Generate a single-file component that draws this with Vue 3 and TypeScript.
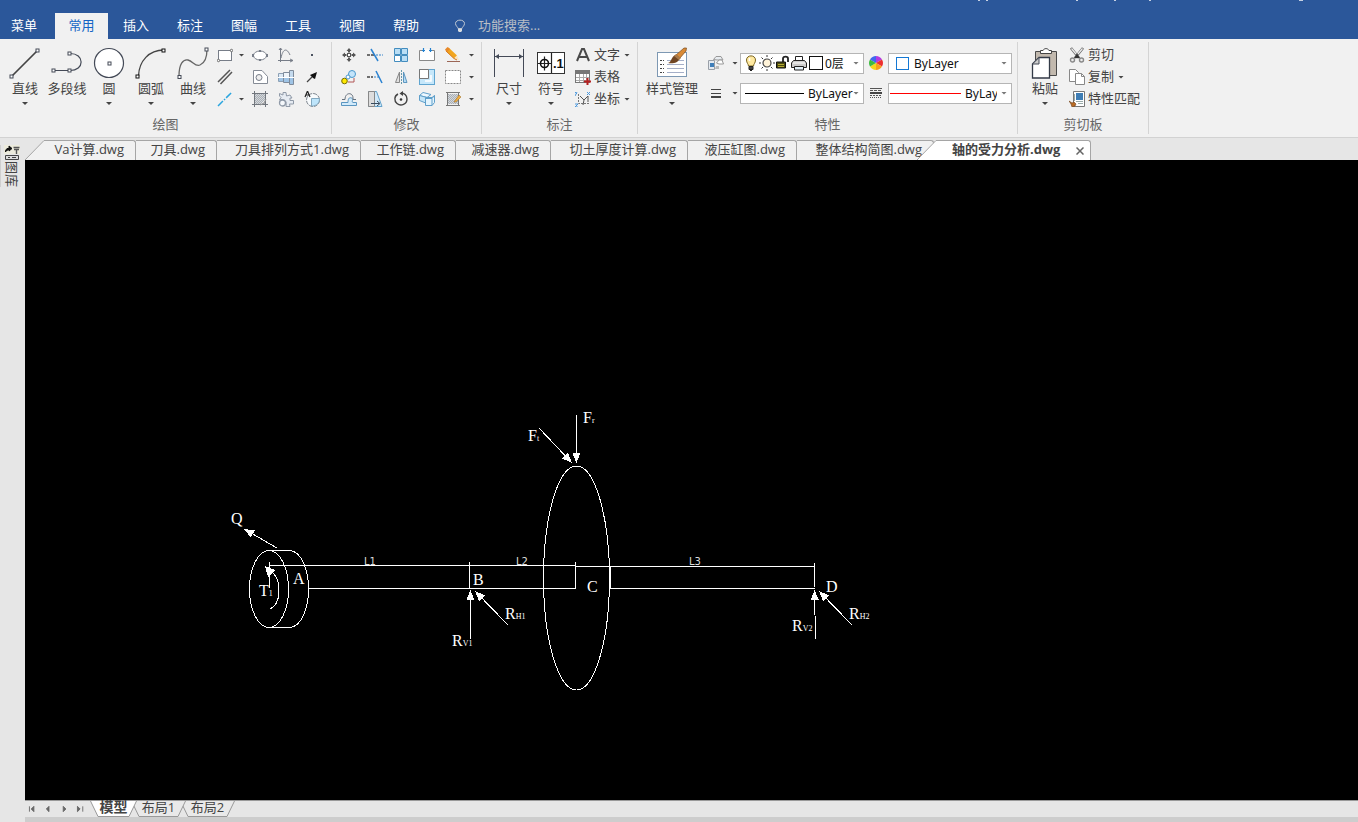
<script setup lang="ts">
import { ref } from 'vue'

interface BigTool { icon: string; label: string; menu: boolean }
interface SmallTool { icon: string; label: string; menu?: boolean }

const menus: string[] = ['常用', '插入', '标注', '图幅', '工具', '视图', '帮助']
const activeMenu = ref('常用')

const node = (x: number, y: number, c = '#444a57') =>
  `<rect x="${x - 1.5}" y="${y - 1.5}" width="3" height="3" fill="#fff" stroke="${c}"/>`
const hatch = (x: number, y: number, s: number) => {
  let d = ''
  for (let i = 2; i < s * 2; i += 2) {
    const a = Math.max(0, i - s)
    const b = Math.min(i, s)
    d += `M${x + a} ${y + s - b}L${x + b} ${y + s - a}`
  }
  return `<rect x="${x}" y="${y}" width="${s}" height="${s}" fill="#d4d8dc"/><path d="${d}" stroke="#a0a5ab" stroke-width=".8"/>`
}

const big: Record<string, string> = {
  line: `<path d="M3 29L29 3" stroke="#444" stroke-width="1.7"/>${node(2.5, 29.5)}${node(28.5, 3.5)}`,
  pline: `<path d="M2 23.500H18.500C34 24 34 6 18.500 6.500" stroke="#444a57" stroke-width="1.200"/>${node(2.5, 23.5)}${node(18.5, 23.5)}${node(18.5, 6.5)}`,
  circle: `<circle cx="16" cy="16" r="14.500" fill="#fff" stroke="#444a57" stroke-width="1.200"/>${node(16.5, 16.5)}`,
  arc: `<path d="M3.500 29C4 14 14 3 29 3" stroke="#444" stroke-width="1.300"/>${node(2.5, 29.5, '#111')}${node(28.5, 3.5, '#111')}`,
  curve: `<path d="M2 29C2 17 6 12 11 13S18 20 23 18S30 10 30 2" stroke="#666" stroke-width="1.300"/>${node(2.5, 30)}${node(29.5, 2.5)}`,
  dim: `<path d="M1.500 2V30M30.500 2V30M2 9.500H30" stroke="#444a57"/><path d="M2 9.500l4-2.500v5zM30 9.500l-4-2.500v5z" fill="#444a57"/>`,
  symbol: `<rect x="2.500" y="5.500" width="27" height="21" fill="#fff" stroke="#333"/><path d="M16.500 6V26M3 16.500H16M9.500 9.500V23.500" stroke="#222" stroke-width="1.200"/><circle cx="9.500" cy="16.500" r="4" stroke="#111" stroke-width="1.600"/><text x="18" y="21" font-family="Liberation Sans, sans-serif" font-size="13" font-weight="bold" fill="#111">.1</text>`,
  style: `<rect x="1.500" y="5.500" width="29" height="24" fill="#fff" stroke="#7d98b3"/><path d="M4 13.500h4M4 17.500h4M4 21.500h4M4 25.500h4" stroke="#444" stroke-dasharray="2 1"/><path d="M11 13.500h4M22 13.500h6M11 17.500h17M11 21.500h17M11 25.500h17" stroke="#a5afc8"/><path d="M20 8L28 1H30.500L30 4L24 11Z" fill="#d98a36" stroke="#7a4a1c" stroke-width=".7"/><path d="M12 16C16 15 15 9 20 8L24 11C22 16 17 17 12 16Z" fill="#704522"/><path d="M20 7L25 11L23 13L18 9Z" fill="#a97948"/>`,
  paste: `<path d="M6.500 4.500H27.500V28.500H6.500Z" fill="#c2b9ae" stroke="#4a4a4a"/><path d="M11.500 6.500V3.500H14C15 1 19 1 20 3.500H22.500V6.500Z" fill="#fff" stroke="#444"/><path d="M3.500 17L10 10.500H20.500V31H3.500Z" fill="#fff" stroke="#333a47" stroke-width="1.300"/><path d="M10 10.500V17H3.500Z" fill="#ccc" stroke="#444a57"/>`,
}

const small: Record<string, string> = {
  rect: `<rect x="1.500" y="3.500" width="13" height="10" fill="#fff" stroke="#777d88"/><circle cx="1.500" cy="13.500" r="1.200" fill="#fff" stroke="#666"/><circle cx="14.500" cy="3.500" r="1.200" fill="#fff" stroke="#666"/>`,
  parallel: `<path d="M1 13L13 1M3.500 15L15 3" stroke="#555" stroke-width="1.500"/>`,
  xline: `<path d="M1 15L15 1" stroke="#2aa5df" stroke-width="1.500" stroke-dasharray="7 1.500 1.500 1.500"/>`,
  ellipse: `<ellipse cx="8" cy="8.500" rx="6.500" ry="4.500" fill="#fff" stroke="#777d88"/><path d="M0 7h2v3H0zM14 7h2v3h-2zM7 3h2v2H7zM7 12h2v2H7z" fill="#777d88"/>`,
  polygon: `<path d="M1.500 1.500H10L15.500 7.500V14.500H1.500Z" fill="#fff" stroke="#858b95"/><circle cx="7" cy="8.500" r="3" fill="#eee" stroke="#777d88"/>`,
  hatch: `${hatch(2, 3, 11)}<path d="M2.500 0V16M13.500 0V16M0 2.500H16M0 13.500H16" stroke="#72777e"/><path d="M8 14Q13 13 14 8" fill="#fff" stroke="#888"/>`,
  func: `<path d="M2.500 1V15M0 13.500H15M12 12l3 1.500L12 15M1 3l1.500-2L4 3" stroke="#777d88"/><path d="M3 11C5 1 9 1 12 8" stroke="#777d88"/>`,
  shaft: `<path d="M.5 4.500H5.500V12.500H.5Z" fill="#dce9f5" stroke="#8ca0b5"/><path d="M5.500 3.500H11.500V13.500H5.500Z" fill="#eef4fa" stroke="#7e8b9b"/><path d="M11.500 1.500H15.500V15.500H11.500Z" fill="#c4daee" stroke="#7e8b9b"/><path d="M1 9H5V12H1ZM6 9H11V13H6ZM12 9H15V15H12Z" fill="#9fc4e6"/><path d="M0 8.500H16" stroke="#fff"/>`,
  gear: `<path d="M1.500 2.500L5 4V1.500H8L8.500 5L12 4L14 7H12V9.500H15.500V13H11.500L12 15.500H8C8 14 9 11 7 9.500C5 8 3 8.500 1.500 9L3 6.500L1.500 5Z" fill="#e6ebf2" stroke="#909aa8"/><circle cx="4.500" cy="12" r="3" fill="#f5f8fb" stroke="#909aa8" stroke-width="1.300"/>`,
  point: `<rect x="7" y="7" width="2" height="2" fill="#4b5360"/>`,
  arrow: `<path d="M3 13L8 8" stroke="#444" stroke-width="1.200"/><path d="M13 3L11 10L9 9L8 8L6 6Z" fill="#111"/>`,
  zone: `<circle cx="9" cy="9" r="6.500" fill="#f8fbfd" stroke="#7d858e" stroke-dasharray="4 1"/><path d="M7.500 7.500H15.500C15.500 12 13 15 7.500 15Z" fill="#bee5fb" stroke="#83a9c0"/><path d="M1 6L3.500 0L6 6M2 4H5" stroke="#222" stroke-width="1.200"/>`,
  move: `<path d="M8 1l2.500 3H9v1.500H7V4H5.500zM8 15l2.500-3H9v-1.500H7V12H5.500zM1 8l3-2.500V7h1.500v2H4v1.500zM15 8l-3-2.500V7h-1.500v2H12v1.500z" fill="#555"/><rect x="6.500" y="6.500" width="3" height="3" fill="#fff" stroke="#555"/>`,
  trim: `<path d="M0 8H7" stroke="#444" stroke-width="1.500" stroke-dasharray="3 1"/><path d="M9 8H16" stroke="#3784ca" stroke-width="1.200" stroke-dasharray="2 1"/><path d="M4 2L11 14" stroke="#2b83d2" stroke-width="1.500"/>`,
  array: `<path d="M1.500 1.500h6v6h-6zM8.500 1.500h6v6h-6zM8.500 8.500h6v6h-6z" fill="#b9def5" stroke="#438dbf"/><path d="M1.500 8.500h6v6h-6z" fill="#fff" stroke="#438dbf"/>`,
  break: `<path d="M.5 3.500H15.500V13.500H.5Z" fill="#fff" stroke="#888"/><path d="M5 3.500H11" stroke="#fff" stroke-width="2"/><path d="M4.500 1V5M11.500 1V5M3 3.500H6M10 3.500H13" stroke="#2481cf" stroke-width="1.200"/>`,
  erase: `<path d="M.5 3.500L3.500 .5L12 8.500L9 11.500Z" fill="#f2a51d"/><path d="M9 11.500L12 8.500L14 13Z" fill="#fbe4bd"/><path d="M1 4L9 11.500L12 13" stroke="#d57516"/><path d="M0 2.500L2.500 0L5 2L2 5Z" fill="#e7882b"/><path d="M2 14.500H15" stroke="#9b6657"/>`,
  copy: `<circle cx="3.500" cy="12" r="2.800" fill="#ffe900" stroke="#746b00"/><circle cx="11" cy="5" r="3.500" fill="#c4e4fa" stroke="#4a98cc"/><circle cx="7" cy="8" r="2" fill="#fff" stroke="#4a98cc"/><path d="M7 13H13V9" stroke="#b15757"/>`,
  extend: `<path d="M0 8H6" stroke="#444" stroke-width="1.500" stroke-dasharray="3 1"/><path d="M7 8H12" stroke="#3784ca" stroke-dasharray="2 1"/><path d="M9 2L15 14" stroke="#2b83d2" stroke-width="1.500"/>`,
  mirror: `<path d="M6.500 3V13.500H2.500Z" fill="#e0e0e0" stroke="#888"/><path d="M10.500 3V13.500H14Z" fill="#b6dcf5" stroke="#5c96bf"/><path d="M8.500 1V15" stroke="#69a" stroke-dasharray="2 1"/>`,
  scale: `<rect x=".5" y=".5" width="15" height="15" fill="#c6e7fa" stroke="#60a5d0"/><path d="M.5 .5H9.500V9.500H.5Z" fill="#fff" stroke="#777"/><path d="M12 6V12H6" stroke="#fff" stroke-width="1.500"/>`,
  select: `<rect x=".5" y="1.500" width="15" height="13" fill="#fff" stroke="#888" stroke-dasharray="2 1"/>`,
  offset: `<path d="M.5 14.500H15.500V11.500H12C10 11 13 8 10.500 7C8 6 7 8 7 11.500H.5Z" fill="#d2eafa" stroke="#5995c0"/><path d="M1 8.500H4C4 1 12 1 12 7V8.500H15" stroke="#68737f"/>`,
  stretch: `<path d="M1.500 .5H9.500L15 15.500H1.500Z" fill="#d2eafa" stroke="#64a2cb"/><path d="M1.500 .5H7.500V15.500H1.500Z" fill="#ddd" stroke="#888"/><path d="M4 12.500H12M10 10l3 2.500L10 15" stroke="#374b5f"/>`,
  rotate: `<path d="M5 3C1 5 1 10 4 12.500C8 16 14 13 14 8C14 4 11 2 8 2" stroke="#444" stroke-width="1.400"/><path d="M10 0L6.500 2.500L10 5Z" fill="#444"/><circle cx="8" cy="8.500" r="1.300" fill="#333"/>`,
  box: `<path d="M.5 4.500L4 1.500L12 3.500L8 6.500Z" fill="#eef8ff" stroke="#5f9fca"/><path d="M.5 4.500V9.500L8 12.500V6.500Z" fill="#c5e5f8" stroke="#5f9fca"/><path d="M6.500 6.500H13L15.500 4.500V11.500L13 14.500H6.500Z" fill="#e4f4fd" stroke="#5f9fca"/><path d="M6.500 7.500H13V14.500M13 7.500L15.500 4.500" stroke="#5f9fca"/>`,
  hatchEdit: `${hatch(3, 3, 10)}<path d="M2.500 1V15M13.500 1V15M1 1.500H15M1 14.500H15" stroke="#777"/><path d="M9 11L14 4L16 6L11 11Z" fill="#efad3f" stroke="#9b6b24" stroke-width=".5"/>`,
  letter: `<path d="M2 14L7 2H9L14 14M4.500 10H11.500" stroke="#4a4a4a" stroke-width="2"/>`,
  table: `<rect x=".5" y="1.500" width="14" height="12" fill="#fff" stroke="#777"/><path d="M1 2H14V5H1Z" fill="#777"/><path d="M1 8.500H14M1 11.500H14M4.500 5V13M8.500 5V13M11.500 5V13" stroke="#aaa"/><path d="M12.500 9V16M9 12.500H16" stroke="#b52020" stroke-width="2"/>`,
  coord: `<path d="M3.500 3V12.500H14" stroke="#777" stroke-dasharray="2 1"/><path d="M5 5L9 9L8 14M9 9L13 5V11" stroke="#555"/><path d="M0 1l2 2M2 1L0 5M12 1l3 3M15 1l-3 3M0 13h3l-3 3h3" stroke="#4c98dc"/>`,
  cut: `<path d="M2 1L10 11M14 1L6 11" stroke="#666" stroke-width="2.600"/><path d="M2.500 1.500L7 7M13.500 1.500L9 7" stroke="#eee" stroke-width="1.200"/><circle cx="3.500" cy="13" r="2" fill="#eee" stroke="#888" stroke-width="1.400"/><circle cx="12.500" cy="13" r="2" fill="#eee" stroke="#888" stroke-width="1.400"/><path d="M8 7l3 4H5z" fill="#333"/>`,
  duplicate: `<path d="M.5 .5H6.500L9.500 3.500V12.500H.5Z" fill="#fff" stroke="#888"/><path d="M6.500 4.500H12.500L15.500 7.500V15.500H6.500Z" fill="#fff" stroke="#888"/><path d="M12.500 4.500V7.500H15.500" stroke="#888"/>`,
  match: `<path d="M4.500 .5H15.500V15.500H4.500Z" fill="#fff" stroke="#777"/><rect x="7" y="2" width="7" height="7" fill="#3e7db5"/><path d="M7 10.500H14M9 12.500H14M5.500 3V10" stroke="#9aa"/><path d="M0 10L3 12L5 11L7 13L6 15L3 16L2 13Z" fill="#b96c25" stroke="#714019" stroke-width=".6"/>`,
  layers: `<path d="M5.500 4.500L8 1.500H13L15 5L9 5Z" fill="#e8ecf0" stroke="#999"/><path d="M8.500 8L11 5H14L15.500 9H11Z" fill="#fff" stroke="#999"/><path d="M.5 5.500H6.500V14.500H.5Z" fill="#e5eaf0" stroke="#9aa0a8"/><rect x="2" y="8" width="4" height="4" fill="#3f7eb9"/><path d="M8 11h3v3H7z" fill="#bbb"/>`,
  lineweight: `<path d="M3 4.500H13M3 8.500H13" stroke="#444"/><path d="M3 12H13" stroke="#444" stroke-width="2"/>`,
  linetype: `<path d="M2 3.500H14" stroke="#555"/><path d="M2 5.500H14" stroke="#555" stroke-dasharray="3 1"/><path d="M2 8H14" stroke="#444" stroke-width="2"/><path d="M2 10.500H14" stroke="#555" stroke-dasharray="2 1"/><path d="M2 12.500H14" stroke="#555" stroke-dasharray="1 1"/>`,
  wheel: `<path d="M8 8V1A7 7 0 0 1 14 4.500Z" fill="#b33be0"/><path d="M8 8L14 4.500A7 7 0 0 1 14 11.500Z" fill="#ed2e2e"/><path d="M8 8L14 11.500A7 7 0 0 1 8 15Z" fill="#f99d1c"/><path d="M8 8V15A7 7 0 0 1 2 11.500Z" fill="#f3d51d"/><path d="M8 8L2 11.500A7 7 0 0 1 2 4.500Z" fill="#3dbb3f"/><path d="M8 8L2 4.500A7 7 0 0 1 8 1Z" fill="#3f68ee"/>`,
  bulb: `<path d="M5.500 11C5.500 9 3.500 8 3.500 5C3.500-.5 12.500-.5 12.500 5C12.500 8 10.500 9 10.500 11Z" fill="#ffe9a0" stroke="#7a6420"/><path d="M6 11.500H10V14.500H6ZM7 15.500H9" fill="#444" stroke="#222"/><path d="M6.500 3V6" stroke="#fff" stroke-width="1.500"/>`,
  sun: `<circle cx="8" cy="8" r="4" fill="#fff3d8" stroke="#444" stroke-width="1.200"/><path d="M8 0V2M8 14V16M0 8H2M14 8H16M2.500 2.500l1.500 1.500M12 12l1.500 1.500M2.500 13.500L4 12M12 4l1.500-1.500" stroke="#333"/>`,
  lock: `<path d="M8 8V3.500C8 1 13 1 13 3.500V7" stroke="#222" stroke-width="1.800"/><path d="M1.500 7H10.500V13H1.500Z" fill="#4c4a10" stroke="#111"/><path d="M3 9.500H9M3 11.500H9" stroke="#b4aa32"/>`,
  printer: `<path d="M4.500 6V1.500H11.500V6" fill="#fff" stroke="#222"/><path d="M2.500 5.500H13.500L15.500 8V12.500H.5V8Z" fill="#ccc" stroke="#222"/><path d="M3.500 11.500H12.500V15H3.500Z" fill="#e3f0f8" stroke="#222"/><path d="M2 8H14" stroke="#fff"/>`,
}

const drawBig: BigTool[] = [
  { icon: 'line', label: '直线', menu: true },
  { icon: 'pline', label: '多段线', menu: false },
  { icon: 'circle', label: '圆', menu: true },
  { icon: 'arc', label: '圆弧', menu: true },
  { icon: 'curve', label: '曲线', menu: true },
]
const drawShapes: SmallTool[] = [
  { icon: 'rect', label: '矩形', menu: true },
  { icon: 'parallel', label: '平行线' },
  { icon: 'xline', label: '中心线', menu: true },
]
const drawMore: SmallTool[] = [
  { icon: 'ellipse', label: '椭圆' }, { icon: 'func', label: '公式曲线' }, { icon: 'point', label: '点' },
  { icon: 'polygon', label: '局部放大' }, { icon: 'shaft', label: '孔/轴' }, { icon: 'arrow', label: '箭头' },
  { icon: 'hatch', label: '剖面线' }, { icon: 'gear', label: '齿形' }, { icon: 'zone', label: '圆弧标记' },
]
const modifyTools: SmallTool[] = [
  { icon: 'move', label: '平移' }, { icon: 'trim', label: '裁剪' }, { icon: 'array', label: '阵列' }, { icon: 'break', label: '打断' }, { icon: 'erase', label: '删除' },
  { icon: 'copy', label: '平移复制' }, { icon: 'extend', label: '延伸' }, { icon: 'mirror', label: '镜像' }, { icon: 'scale', label: '缩放' }, { icon: 'select', label: '选择' },
  { icon: 'offset', label: '等距线' }, { icon: 'stretch', label: '拉伸' }, { icon: 'rotate', label: '旋转' }, { icon: 'box', label: '分解' }, { icon: 'hatchEdit', label: '编辑剖面线' },
]
const markBig: BigTool[] = [
  { icon: 'dim', label: '尺寸', menu: true },
  { icon: 'symbol', label: '符号', menu: true },
]
const markRows: SmallTool[] = [
  { icon: 'letter', label: '文字', menu: true },
  { icon: 'table', label: '表格' },
  { icon: 'coord', label: '坐标', menu: true },
]
const clipRows: SmallTool[] = [
  { icon: 'cut', label: '剪切' },
  { icon: 'duplicate', label: '复制', menu: true },
  { icon: 'match', label: '特性匹配' },
]

const docs = [
  { name: 'Va计算.dwg', width: 91 },
  { name: '刀具.dwg', width: 81 },
  { name: '刀具排列方式1.dwg', width: 144 },
  { name: '工作链.dwg', width: 95 },
  { name: '减速器.dwg', width: 95 },
  { name: '切土厚度计算.dwg', width: 137 },
  { name: '液压缸图.dwg', width: 109 },
  { name: '整体结构简图.dwg', width: 137 },
]

const sheets = [
  { name: '模型', width: 47 },
  { name: '布局1', width: 55 },
  { name: '布局2', width: 55 },
]
const activeSheet = ref('模型')
const pagers = [
  { label: '首页', d: 'M4 6V12M9 6V12L6 9Z' },
  { label: '上一页', d: 'M8 6V12L5 9Z' },
  { label: '下一页', d: 'M6 6V12L9 9Z' },
  { label: '末页', d: 'M10 6V12M4 6V12L7 9Z' },
]

interface Force { x1: number; y1: number; x2: number; y2: number }
const forces: Force[] = [
  { x1: 277, y1: 548, x2: 244, y2: 529 },
  { x1: 539, y1: 428, x2: 572, y2: 463 },
  { x1: 576.5, y1: 415, x2: 576.5, y2: 463 },
  { x1: 470.5, y1: 639, x2: 470.5, y2: 590 },
  { x1: 508, y1: 625, x2: 475, y2: 591 },
  { x1: 815.5, y1: 639, x2: 814.5, y2: 590 },
  { x1: 852, y1: 625, x2: 819, y2: 591 },
]
const head = (f: Force): string => {
  const len = Math.hypot(f.x2 - f.x1, f.y2 - f.y1)
  const ux = (f.x2 - f.x1) / len
  const uy = (f.y2 - f.y1) / len
  const bx = f.x2 - ux * 10
  const by = f.y2 - uy * 10
  return `${f.x2},${f.y2} ${bx - uy * 4},${by + ux * 4} ${bx + uy * 4},${by - ux * 4}`
}
const marks = [
  { x: 231, y: 524, t: 'Q', s: '' },
  { x: 259, y: 596, t: 'T', s: '1' },
  { x: 293, y: 584, t: 'A', s: '' },
  { x: 473, y: 585, t: 'B', s: '' },
  { x: 587, y: 592, t: 'C', s: '' },
  { x: 826, y: 592, t: 'D', s: '' },
  { x: 528, y: 441, t: 'F', s: 't' },
  { x: 583, y: 423, t: 'F', s: 'r' },
  { x: 452, y: 646, t: 'R', s: 'V1' },
  { x: 505, y: 619, t: 'R', s: 'H1' },
  { x: 792, y: 631, t: 'R', s: 'V2' },
  { x: 849, y: 619, t: 'R', s: 'H2' },
]
</script>

<template>
  <div class="app">
    <header class="menubar">
      <svg class="title-edge" width="330" height="2" aria-hidden="true">
        <path d="M1 .5h2M9 .5h2M99 .5h2M137 .5h2M172 .5h2M322 .5h4" stroke="#c6d1e3" />
      </svg>
      <button class="menu-main" type="button">菜单</button>
      <nav class="menus">
        <button v-for="m in menus" :key="m" type="button" class="menu" :class="{ active: m === activeMenu }" @click="activeMenu = m">{{ m }}</button>
      </nav>
      <label class="search">
        <svg width="12" height="14" viewBox="0 0 12 14" fill="none" aria-hidden="true">
          <path d="M4 9.500C4 8 1.500 7 1.500 4.500C1.500 0 10.500 0 10.500 4.500C10.500 7 8 8 8 9.500Z" stroke="#bfc8d4" />
          <path d="M4 10h4v2l-1 1H5l-1-1z" fill="#d9dde2" />
        </svg>
        <input type="text" placeholder="功能搜索..." aria-label="功能搜索" />
      </label>
    </header>

    <div class="ribbon">
      <section class="group group-draw">
        <div class="tools">
          <button v-for="b in drawBig" :key="b.icon" type="button" class="big">
            <svg width="32" height="32" viewBox="0 0 32 32" fill="none" v-html="big[b.icon]" />
            <span>{{ b.label }}</span>
            <i v-if="b.menu" class="caret" />
          </button>
          <div class="shapes">
            <div v-for="t in drawShapes" :key="t.icon" class="shape-row">
              <button type="button" class="tool" :aria-label="t.label"><svg width="16" height="16" viewBox="0 0 16 16" fill="none" v-html="small[t.icon]" /></button>
              <button v-if="t.menu" type="button" class="drop" :aria-label="t.label + '选项'"><i class="caret" /></button>
            </div>
          </div>
          <div class="matrix three">
            <button v-for="t in drawMore" :key="t.icon" type="button" class="tool" :aria-label="t.label"><svg width="16" height="16" viewBox="0 0 16 16" fill="none" v-html="small[t.icon]" /></button>
          </div>
        </div>
        <h2>绘图</h2>
      </section>

      <section class="group group-modify">
        <div class="tools">
          <div class="matrix five">
            <button v-for="t in modifyTools" :key="t.icon" type="button" class="tool" :aria-label="t.label"><svg width="16" height="16" viewBox="0 0 16 16" fill="none" v-html="small[t.icon]" /></button>
          </div>
          <div class="drops">
            <button v-for="n in 3" :key="n" type="button" class="drop" aria-label="更多"><i class="caret" /></button>
          </div>
        </div>
        <h2>修改</h2>
      </section>

      <section class="group group-mark">
        <div class="tools">
          <button v-for="b in markBig" :key="b.icon" type="button" class="big">
            <svg width="32" height="32" viewBox="0 0 32 32" fill="none" v-html="big[b.icon]" />
            <span>{{ b.label }}</span>
            <i class="caret" />
          </button>
          <div class="rows">
            <button v-for="t in markRows" :key="t.icon" type="button" class="row">
              <svg width="16" height="16" viewBox="0 0 16 16" fill="none" v-html="small[t.icon]" />
              <span>{{ t.label }}</span>
              <i v-if="t.menu" class="caret" />
            </button>
          </div>
        </div>
        <h2>标注</h2>
      </section>

      <section class="group group-props">
        <div class="tools">
          <button type="button" class="big wide">
            <svg width="32" height="32" viewBox="0 0 32 32" fill="none" v-html="big.style" />
            <span>样式管理</span>
            <i class="caret" />
          </button>
          <div class="props">
            <button type="button" class="prop-btn" aria-label="图层"><svg width="16" height="16" viewBox="0 0 16 16" fill="none" v-html="small.layers" /><i class="caret" /></button>
            <div class="combo">
              <span class="states">
                <svg v-for="s in ['bulb', 'sun', 'lock', 'printer']" :key="s" width="16" height="16" viewBox="0 0 16 16" fill="none" v-html="small[s]" />
                <b class="swatch black" />
              </span>
              <select aria-label="当前图层"><option>0层</option></select>
              <i class="caret" />
            </div>
            <button type="button" class="icon-btn" aria-label="颜色"><svg width="16" height="16" viewBox="0 0 16 16" fill="none" v-html="small.wheel" /></button>
            <div class="combo">
              <b class="swatch blue" />
              <select aria-label="颜色"><option>ByLayer</option></select>
              <i class="caret" />
            </div>
            <button type="button" class="prop-btn" aria-label="线宽"><svg width="16" height="16" viewBox="0 0 16 16" fill="none" v-html="small.lineweight" /><i class="caret" /></button>
            <div class="combo">
              <b class="stroke dark" />
              <select aria-label="线宽"><option>ByLayer</option></select>
              <i class="caret" />
            </div>
            <button type="button" class="icon-btn" aria-label="线型"><svg width="16" height="16" viewBox="0 0 16 16" fill="none" v-html="small.linetype" /></button>
            <div class="combo">
              <b class="stroke red" />
              <select class="narrow" aria-label="线型"><option>ByLayer</option></select>
              <i class="caret" />
            </div>
          </div>
        </div>
        <h2>特性</h2>
      </section>

      <section class="group group-clip">
        <div class="tools">
          <button type="button" class="big">
            <svg width="32" height="32" viewBox="0 0 32 32" fill="none" v-html="big.paste" />
            <span>粘贴</span>
            <i class="caret" />
          </button>
          <div class="rows">
            <button v-for="t in clipRows" :key="t.icon" type="button" class="row">
              <svg width="16" height="16" viewBox="0 0 16 16" fill="none" v-html="small[t.icon]" />
              <span>{{ t.label }}</span>
              <i v-if="t.menu" class="caret" />
            </button>
          </div>
        </div>
        <h2>剪切板</h2>
      </section>
    </div>

    <div class="workspace">
      <aside class="dock">
        <button type="button" class="library">
          <svg width="16" height="16" viewBox="0 0 16 16" fill="none" aria-hidden="true">
            <path d="M0 0H16V9H0Z" fill="#ecebdc" />
            <path d="M1.500 7V5.500L3 3.500H7M5 1L8 3.500L5 6Z" fill="#111" stroke="#111" />
            <path d="M9.500 2.500H15.500M10 4.500H15M12.500 4V9" stroke="#555" stroke-width="1.400" />
            <path d="M1.500 10.500H14.500V14.500H1.500Z" fill="#ddd" stroke="#444" />
            <path d="M4 12.500H6M8 12.500H12" stroke="#444" />
          </svg>
          <span>图库</span>
        </button>
      </aside>
      <main class="stage">
        <div class="doc-tabs" role="tablist">
          <svg class="slant" width="20" height="20" viewBox="0 0 20 20" fill="#f1f1f1" aria-hidden="true"><path d="M0 20L19 .5H20V20Z" /><path d="M0 20L19 .5H20" fill="none" stroke="#a5a5a5" /></svg>
          <button v-for="d in docs" :key="d.name" type="button" role="tab" class="doc" :style="{ width: d.width + 'px' }">{{ d.name }}</button>
          <div class="current">
            <svg class="slant" width="20" height="20" viewBox="0 0 20 20" fill="#fff" aria-hidden="true"><path d="M0 20L19 .5H20V20Z" /><path d="M0 20L19 .5H20" fill="none" stroke="#a5a5a5" /></svg>
            <div class="current-body">
              <button type="button" role="tab" aria-selected="true" class="current-name">轴的受力分析.dwg</button>
              <button type="button" class="close" aria-label="关闭"><svg width="8" height="8" viewBox="0 0 8 8"><path d="M.5 .5L7.500 7.500M7.500 .5L.5 7.500" stroke="#666" stroke-width="1.500" /></svg></button>
            </div>
          </div>
        </div>

        <div class="canvas">
          <svg class="drawing" width="100%" height="100%" fill="none" stroke="#fff" shape-rendering="crispEdges">
            <g transform="translate(-25 -160)">
              <ellipse cx="269" cy="589" rx="19.500" ry="38.500" />
              <path d="M269 550.500H290C302 552 308.500 570 308.500 589S302 626 290 627.500H269" />
              <path d="M269.500 562V588M269.500 565.500H575.500M469.500 562V588.500M575.500 562V588.500" />
              <path d="M309 588.500H576M575.500 566.500H814.500M814.500 563V587M610.500 588.500H815" />
              <path d="M543.500 565V589M610.500 566V589" />
              <ellipse cx="576.500" cy="578" rx="33" ry="112" />
              <path d="M270 609C281 604 282 582 273 573" />
              <polygon points="265,566 275,570 268,577" fill="#fff" stroke="none" />
              <g v-for="(f, i) in forces" :key="i">
                <line :x1="f.x1" :y1="f.y1" :x2="f.x2" :y2="f.y2" />
                <polygon :points="head(f)" fill="#fff" stroke="none" />
              </g>
              <g class="letters" stroke="none" fill="#fff">
                <text v-for="(m, i) in marks" :key="i" :x="m.x" :y="m.y">{{ m.t }}<tspan v-if="m.s" class="sub">{{ m.s }}</tspan></text>
              </g>
              <g class="dims" stroke="none" fill="#ddd">
                <text x="364" y="565">L1</text>
                <text x="516" y="565">L2</text>
                <text x="689" y="565">L3</text>
              </g>
            </g>
          </svg>
        </div>

        <footer class="sheets">
          <div class="pagers">
            <button v-for="p in pagers" :key="p.label" type="button" :aria-label="p.label"><svg width="16" height="16" viewBox="0 0 16 18"><path :d="p.d" fill="#666" stroke="#666" /></svg></button>
          </div>
          <button v-for="s in sheets" :key="s.name" type="button" class="sheet" :class="{ active: s.name === activeSheet }" :style="{ width: s.width + 'px' }" @click="activeSheet = s.name">
            <svg class="sheet-shape" :viewBox="`0 0 ${s.width} 17`" aria-hidden="true"><path :d="`M.5 0L8 15.500H${s.width - 8}L${s.width - .5} 0`" /></svg>
            <span>{{ s.name }}</span>
          </button>
        </footer>
        <div class="underbar" />
      </main>
    </div>
  </div>
</template>

<style>
body {
  margin: 0;
  background: #e6e6e6;
}
</style>

<style scoped>
.app {
  display: flex;
  flex-direction: column;
  min-height: 100vh;
  overflow: hidden;
  font-family: "Open Sans", "Noto Sans CJK SC", sans-serif;
  font-size: 13px;
  line-height: 18px;
  color: #444;
}
.app * {
  box-sizing: border-box;
}
button,
input,
select {
  margin: 0;
  padding: 0;
  border: 0;
  background: none;
  font: inherit;
  color: inherit;
}
svg {
  display: block;
  flex: none;
}

.menubar {
  position: relative;
  display: flex;
  align-items: flex-end;
  height: 39px;
  background: #2b579a;
  color: #fff;
}
.title-edge {
  position: absolute;
  top: 0;
  left: 977px;
}
.menu-main {
  width: 48px;
  height: 26px;
  margin-right: 7px;
  padding-bottom: 3px;
}
.menus {
  display: flex;
}
.menu {
  width: 54px;
  height: 26px;
  padding-bottom: 3px;
}
.menu.active {
  width: 53px;
  margin-right: 1px;
  background: #f1f1f1;
  color: #1565c5;
}
.search {
  display: flex;
  align-items: center;
  gap: 12px;
  height: 26px;
  margin-left: 21px;
}
.search input {
  width: 120px;
  padding-bottom: 3px;
  outline: none;
}
.search input::placeholder {
  color: #b9bec6;
  opacity: 1;
}

.ribbon {
  display: flex;
  height: 99px;
  padding: 3px 0;
  background: #f1f1f1;
  border-bottom: 1px solid #d2d2d2;
}
.group {
  display: flex;
  flex-direction: column;
  justify-content: space-between;
  border-right: 1px solid #d4d4d4;
}
.group h2 {
  margin: 0;
  font-size: 13px;
  font-weight: 400;
  line-height: 20px;
  text-align: center;
  color: #666;
}
.group-draw { width: 332px; }
.group-modify { width: 150px; }
.group-mark { width: 156px; }
.group-props { width: 380px; }
.group-clip { width: 131px; }
.tools {
  display: flex;
  padding-left: 4px;
}
.group-mark .tools,
.group-props .tools,
.group-clip .tools {
  padding-left: 6px;
}
.big {
  display: flex;
  flex-direction: column;
  align-items: center;
  width: 42px;
  height: 66px;
  padding-top: 5px;
  white-space: nowrap;
}
.big.wide {
  width: 56px;
}
.big .caret {
  margin-top: 5px;
}
.caret {
  flex: none;
  width: 6px;
  height: 3px;
  background: #444;
  clip-path: polygon(0 0, 100% 0, 50% 100%);
}
.shapes {
  width: 33px;
  padding-top: 2px;
}
.shape-row {
  display: flex;
  height: 22px;
}
.shape-row .tool {
  width: 22px;
}
.tool {
  display: flex;
  align-items: center;
  justify-content: center;
  height: 22px;
}
.drop {
  display: flex;
  align-items: center;
  justify-content: center;
  width: 11px;
  height: 22px;
}
.matrix {
  display: grid;
  grid-auto-rows: 22px;
  padding-top: 2px;
}
.three { grid-template-columns: repeat(3, 26px); }
.five { grid-template-columns: repeat(5, 26px); }
.drops {
  padding-top: 2px;
}
.rows {
  padding-top: 2px;
}
.row {
  display: flex;
  align-items: center;
  gap: 3px;
  height: 22px;
  padding-left: 3px;
  white-space: nowrap;
}
.row span {
  padding-bottom: 3px;
}
.row .caret {
  margin-left: 1px;
}
.props {
  display: grid;
  grid-template-columns: 40px 124px 24px 124px;
  grid-auto-rows: 30px;
  align-items: center;
  padding-top: 6px;
}
.prop-btn {
  display: flex;
  align-items: center;
  gap: 8px;
  padding-left: 8px;
}
.icon-btn {
  display: flex;
  justify-content: center;
}
.combo {
  display: flex;
  align-items: center;
  height: 21px;
  padding: 0 4px;
  background: #fff;
  border: 1px solid #b5b5b5;
  font-size: 12px;
  color: #111;
}
.combo select {
  flex: 1;
  min-width: 0;
  padding-top: 1px;
  appearance: none;
  font-family: "Noto Sans", "Noto Sans CJK SC", sans-serif;
  font-size: 12px;
  line-height: 18px;
}
.combo .narrow {
  margin-right: 4px;
}
.combo .caret {
  background: #777;
}
.states {
  display: flex;
  align-items: center;
  margin-left: -2px;
}
.swatch {
  flex: none;
  width: 14px;
  height: 14px;
  margin: 0 2px;
  background: #fff;
  border: 1px solid #111;
}
.swatch.blue {
  width: 13px;
  height: 13px;
  margin: 0 5px 0 3px;
  border-color: #1478d4;
}
.stroke {
  flex: none;
  height: 1px;
  margin-right: 4px;
}
.stroke.dark {
  width: 59px;
  background: #000;
}
.stroke.red {
  width: 71px;
  margin-left: -3px;
  background: #f00;
}

.workspace {
  display: flex;
  flex: 1;
  background: #e6e6e6;
}
.dock {
  flex: none;
  width: 25px;
  padding-top: 7px;
}
.library {
  display: flex;
  flex-direction: column;
  align-items: center;
  width: 22px;
  border-left: 1px solid #cfcfcf;
}
.library span {
  font-size: 13px;
  line-height: 14px;
  writing-mode: vertical-rl;
  text-orientation: sideways;
}
.stage {
  display: flex;
  flex: 1;
  flex-direction: column;
  min-width: 0;
}
.doc-tabs {
  display: flex;
  align-items: flex-end;
  height: 22px;
}
.doc {
  flex: none;
  height: 20px;
  padding: 0 11px 3px 0;
  background: #f1f1f1;
  border-top: 1px solid #a5a5a5;
  border-right: 1px solid #a5a5a5;
  border-top-right-radius: 3px;
  line-height: 16px;
  text-align: right;
  white-space: nowrap;
}
.current {
  display: flex;
  margin-left: -17px;
}
.current-body {
  display: flex;
  align-items: center;
  justify-content: space-between;
  width: 154px;
  height: 20px;
  padding: 0 6px 0 15px;
  background: #fff;
  border-top: 1px solid #a5a5a5;
  border-right: 1px solid #a5a5a5;
  border-top-right-radius: 3px;
}
.current-name {
  padding-bottom: 3px;
  line-height: 16px;
  font-weight: 700;
  white-space: nowrap;
}
.canvas {
  flex: 1;
  min-height: 400px;
  background: #000;
  overflow: hidden;
  display: flex;
}
.drawing {
  flex: 1;
}
.letters {
  font-family: "Liberation Serif", serif;
  font-size: 16px;
}
.sub {
  font-size: 8px;
}
.dims {
  font-family: "DejaVu Sans", sans-serif;
  font-size: 10px;
}
.sheets {
  display: flex;
  height: 17px;
  border-top: 1px solid #999;
}
.pagers {
  display: flex;
  width: 65px;
}
.pagers button {
  width: 16px;
}
.sheet {
  position: relative;
  flex: none;
  height: 16px;
  padding-bottom: 4px;
  line-height: 12px;
}
.sheet + .sheet {
  margin-left: -6px;
}
.sheet.active {
  z-index: 2;
  font-size: 14px;
  font-weight: 700;
}
.sheet:nth-of-type(2) {
  z-index: 1;
}
.sheet-shape {
  position: absolute;
  inset: 0;
  width: 100%;
  height: 17px;
  fill: #e9e9e9;
  stroke: #999;
}
.sheet.active .sheet-shape {
  fill: #fff;
}
.sheet span {
  position: relative;
}
.underbar {
  height: 5px;
  background: #cdcdcd;
}
</style>
